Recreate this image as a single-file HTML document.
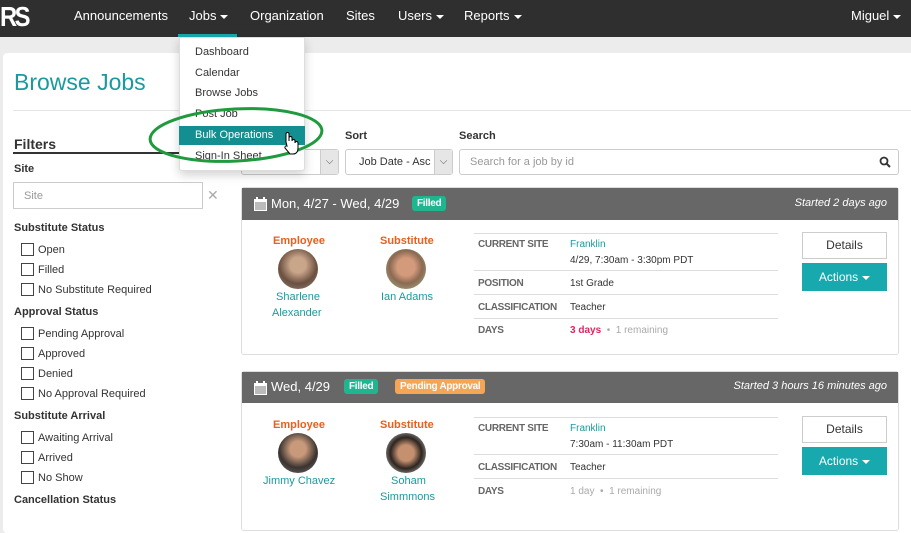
<!DOCTYPE html>
<html><head><meta charset="utf-8"><style>
*{box-sizing:border-box;margin:0;padding:0}
body{width:911px;height:517px;overflow:hidden;background:#ececec;font-family:"Liberation Sans",sans-serif;font-size:11px;color:#333;position:relative}
.a{position:absolute;white-space:nowrap}
.nav{position:absolute;left:0;top:0;width:911px;height:37px;background:#2f2f2f}
.nav .a{color:#fff;font-size:13px;top:8px}
.car{display:inline-block;border-left:4px solid transparent;border-right:4px solid transparent;border-top:4px solid #fff;vertical-align:middle;margin-left:4px}
.panel{position:absolute;left:3px;top:53px;width:920px;height:480px;background:#fff;border-radius:4px}
.h{font-weight:bold;font-size:11px;color:#333}
.cb{position:absolute;width:13px;height:13px;border:1px solid #444}
.lbl{font-size:11px}
.sel{position:absolute;border:1px solid #ccc;border-radius:3px;background:#fff;height:26px}
.sb{position:absolute;right:0;top:0;width:18px;height:24px;background:#e6e6e6;border-left:1px solid #ccc;color:#555;font-size:10px;text-align:center;line-height:24px}
.card{position:absolute;left:241px;width:658px;border:1px solid #ddd;border-radius:3px;background:#fff}
.ch{position:absolute;left:0;top:0;width:100%;height:32px;background:#676767;color:#fff}
.badge{position:absolute;color:#fff;font-weight:bold;font-size:10px;padding:2px 5px;border-radius:3px;letter-spacing:-.3px}
.or{color:#e8601c;font-weight:bold;font-size:11px}
.tl{color:#1a9a9e}
.av{position:absolute;width:40px;height:40px;border-radius:50%}
.ln{position:absolute;left:232px;width:304px;height:1px;background:#ddd}
.tk{color:#666;font-weight:bold;font-size:10px;letter-spacing:-.3px}
.btn{position:absolute;left:560px;width:85px;text-align:center;font-size:12px}
</style></head><body>
<div class="nav">
<div class="a" style="left:0;top:0;font-size:28px;font-weight:bold;color:#fff;letter-spacing:-3px;line-height:34px;transform:scaleX(.85);transform-origin:0 0">RS</div>
<div class="a" style="left:74px">Announcements</div>
<div class="a" style="left:189px">Jobs<span class="car"></span></div>
<div class="a" style="left:250px">Organization</div>
<div class="a" style="left:346px">Sites</div>
<div class="a" style="left:398px">Users<span class="car"></span></div>
<div class="a" style="left:464px">Reports<span class="car"></span></div>
<div class="a" style="left:851px">Miguel<span class="car"></span></div>
<div class="a" style="left:178px;top:34px;width:59px;height:3px;background:#17a9ad"></div>
</div>
<div class="panel"></div>
<div class="a" style="left:14px;top:69px;font-size:23px;color:#1a9a9e">Browse Jobs</div>
<div class="a" style="left:13px;top:110px;width:900px;height:1px;background:#e5e5e5"></div>
<div class="a" style="left:14px;top:136px;font-size:14px;font-weight:bold">Filters</div>
<div class="a" style="left:13px;top:152px;width:225px;height:2px;background:#333"></div>
<div class="a h" style="left:14px;top:163px">Site</div>
<div class="a" style="left:13px;top:182px;width:190px;height:27px;border:1px solid #ccc;color:#999;padding:7px 10px">Site</div>
<div class="a" style="left:207px;top:187px;color:#aaa;font-size:14px">✕</div>
<div class="a h" style="left:14px;top:222px">Substitute Status</div>
<div class="cb" style="left:21px;top:243px"></div><div class="a lbl" style="left:38px;top:244px">Open</div>
<div class="cb" style="left:21px;top:263px"></div><div class="a lbl" style="left:38px;top:264px">Filled</div>
<div class="cb" style="left:21px;top:283px"></div><div class="a lbl" style="left:38px;top:284px">No Substitute Required</div>
<div class="a h" style="left:14px;top:306px">Approval Status</div>
<div class="cb" style="left:21px;top:327px"></div><div class="a lbl" style="left:38px;top:328px">Pending Approval</div>
<div class="cb" style="left:21px;top:347px"></div><div class="a lbl" style="left:38px;top:348px">Approved</div>
<div class="cb" style="left:21px;top:367px"></div><div class="a lbl" style="left:38px;top:368px">Denied</div>
<div class="cb" style="left:21px;top:387px"></div><div class="a lbl" style="left:38px;top:388px">No Approval Required</div>
<div class="a h" style="left:14px;top:410px">Substitute Arrival</div>
<div class="cb" style="left:21px;top:431px"></div><div class="a lbl" style="left:38px;top:432px">Awaiting Arrival</div>
<div class="cb" style="left:21px;top:451px"></div><div class="a lbl" style="left:38px;top:452px">Arrived</div>
<div class="cb" style="left:21px;top:471px"></div><div class="a lbl" style="left:38px;top:472px">No Show</div>
<div class="a h" style="left:14px;top:494px">Cancellation Status</div>

<div class="a h" style="left:345px;top:130px">Sort</div>
<div class="a h" style="left:459px;top:130px">Search</div>
<div class="sel" style="left:241px;top:149px;width:98px"><div class="sb">⌵</div></div>
<div class="sel" style="left:345px;top:149px;width:108px"><div class="a" style="left:13px;top:6px">Job Date - Asc</div><div class="sb">⌵</div></div>
<div class="sel" style="left:459px;top:149px;width:440px;border-radius:3px"><div class="a" style="left:10px;top:6px;color:#999;font-size:11px">Search for a job by id</div>
<svg class="a" style="right:7px;top:6px" width="12" height="12" viewBox="0 0 12 12"><circle cx="5" cy="5" r="3.5" fill="none" stroke="#333" stroke-width="1.8"/><path d="M7.5 7.5L11 11" stroke="#333" stroke-width="2"/></svg></div>

<div class="card" style="top:187px;height:168px">
<div class="ch"><svg class="a" style="left:12px;top:9px" width="13" height="14" viewBox="0 0 13 14"><rect x="0" y="2" width="13" height="12" fill="#fff"/><rect x="1" y="5" width="11" height="8" fill="#bbb"/><rect x="2" y="0" width="2" height="3" fill="#fff"/><rect x="9" y="0" width="2" height="3" fill="#fff"/></svg>
<div class="a" style="left:29px;top:8px;font-size:13px">Mon, 4/27 - Wed, 4/29</div>
<div class="badge" style="left:170px;top:8px;background:#1fb58f">Filled</div>
<div class="a" style="right:11px;top:9px;font-style:italic;font-size:11px">Started 2 days ago</div></div>
<div class="a or" style="left:31px;top:47px">Employee</div>
<div class="av" style="left:36px;top:61px;background:radial-gradient(circle at 50% 40%,#c9a58a 25%,#6b5040 60%,#8a8a80)"></div>
<div class="a tl" style="left:34px;top:103px">Sharlene</div><div class="a tl" style="left:30px;top:119px">Alexander</div>
<div class="a or" style="left:138px;top:47px">Substitute</div>
<div class="av" style="left:144px;top:61px;background:radial-gradient(circle at 50% 45%,#d49a7c 30%,#8b6a52 55%,#a8b890)"></div>
<div class="a tl" style="left:139px;top:103px">Ian Adams</div>
<div class="ln" style="top:45px"></div><div class="ln" style="top:82px"></div><div class="ln" style="top:106px"></div><div class="ln" style="top:130px"></div>
<div class="a tk" style="left:236px;top:51px">CURRENT SITE</div>
<div class="a tl" style="left:328px;top:51px;font-size:10px">Franklin</div>
<div class="a" style="left:328px;top:67px;font-size:10px">4/29, 7:30am - 3:30pm PDT</div>
<div class="a tk" style="left:236px;top:90px">POSITION</div><div class="a" style="left:328px;top:90px;font-size:10px">1st Grade</div>
<div class="a tk" style="left:236px;top:114px">CLASSIFICATION</div><div class="a" style="left:328px;top:114px;font-size:10px">Teacher</div>
<div class="a tk" style="left:236px;top:137px">DAYS</div>
<div class="a" style="left:328px;top:137px;font-size:10px"><b style="color:#e0245e">3 days</b> <span style="color:#aaa">&nbsp;•&nbsp; 1 remaining</span></div>
<div class="btn" style="top:44px;height:27px;border:1px solid #ccc;line-height:25px">Details</div>
<div class="btn" style="top:75px;height:28px;background:#17a9ad;color:#fff;line-height:28px">Actions<span class="car"></span></div>
</div>

<div class="card" style="top:371px;height:160px">
<div class="ch" style="height:31px"><svg class="a" style="left:12px;top:9px" width="13" height="14" viewBox="0 0 13 14"><rect x="0" y="2" width="13" height="12" fill="#fff"/><rect x="1" y="5" width="11" height="8" fill="#bbb"/><rect x="2" y="0" width="2" height="3" fill="#fff"/><rect x="9" y="0" width="2" height="3" fill="#fff"/></svg>
<div class="a" style="left:29px;top:7px;font-size:13px">Wed, 4/29</div>
<div class="badge" style="left:102px;top:7px;background:#1fb58f">Filled</div>
<div class="badge" style="left:153px;top:7px;background:#f6a554">Pending Approval</div>
<div class="a" style="right:11px;top:8px;font-style:italic;font-size:11px">Started 3 hours 16 minutes ago</div></div>
<div class="a or" style="left:31px;top:47px">Employee</div>
<div class="av" style="left:36px;top:61px;background:radial-gradient(circle at 50% 40%,#c8997a 25%,#3a3330 60%,#777)"></div>
<div class="a tl" style="left:21px;top:103px">Jimmy Chavez</div>
<div class="a or" style="left:138px;top:47px">Substitute</div>
<div class="av" style="left:144px;top:61px;background:radial-gradient(circle at 50% 50%,#c49070 28%,#2d2520 55%,#ddd)"></div>
<div class="a tl" style="left:149px;top:103px">Soham</div><div class="a tl" style="left:138px;top:119px">Simmmons</div>
<div class="ln" style="top:45px"></div><div class="ln" style="top:82px"></div><div class="ln" style="top:106px"></div>
<div class="a tk" style="left:236px;top:51px">CURRENT SITE</div>
<div class="a tl" style="left:328px;top:51px;font-size:10px">Franklin</div>
<div class="a" style="left:328px;top:67px;font-size:10px">7:30am - 11:30am PDT</div>
<div class="a tk" style="left:236px;top:90px">CLASSIFICATION</div><div class="a" style="left:328px;top:90px;font-size:10px">Teacher</div>
<div class="a tk" style="left:236px;top:114px">DAYS</div>
<div class="a" style="left:328px;top:114px;font-size:10px;color:#aaa">1 day &nbsp;•&nbsp; 1 remaining</div>
<div class="btn" style="top:44px;height:27px;border:1px solid #ccc;line-height:25px">Details</div>
<div class="btn" style="top:75px;height:28px;background:#17a9ad;color:#fff;line-height:28px">Actions<span class="car"></span></div>
</div>

<div class="a" style="left:179px;top:37px;width:126px;height:134px;background:#fff;border:1px solid #ddd;box-shadow:0 4px 10px rgba(0,0,0,.18);border-radius:0 0 3px 3px"></div>
<div class="a" style="left:195px;top:46px">Dashboard</div>
<div class="a" style="left:195px;top:67px">Calendar</div>
<div class="a" style="left:195px;top:87px">Browse Jobs</div>
<div class="a" style="left:195px;top:108px">Post Job</div>
<div class="a" style="left:179px;top:126px;width:126px;height:19px;background:#138f91"></div>
<div class="a" style="left:195px;top:129px;color:#fff">Bulk Operations</div>
<div class="a" style="left:195px;top:150px">Sign-In Sheet</div>
<svg class="a" style="left:0;top:0" width="911" height="517"><ellipse cx="236" cy="135" rx="86" ry="26" fill="none" stroke="#1f9a3e" stroke-width="3" transform="rotate(-3 236 135)"/>
<path d="M286 142v-8a1.5 1.5 0 0 1 3 0v7v-3a1.5 1.5 0 0 1 3 0v3a1.5 1.5 0 0 1 3 0v2a1.5 1.5 0 0 1 3 0v5c0 4-2 6-5 6h-3l-5-6a1.5 1.5 0 0 1 2-2z" fill="#fff" stroke="#000" stroke-width="1"/></svg>
</body></html>
